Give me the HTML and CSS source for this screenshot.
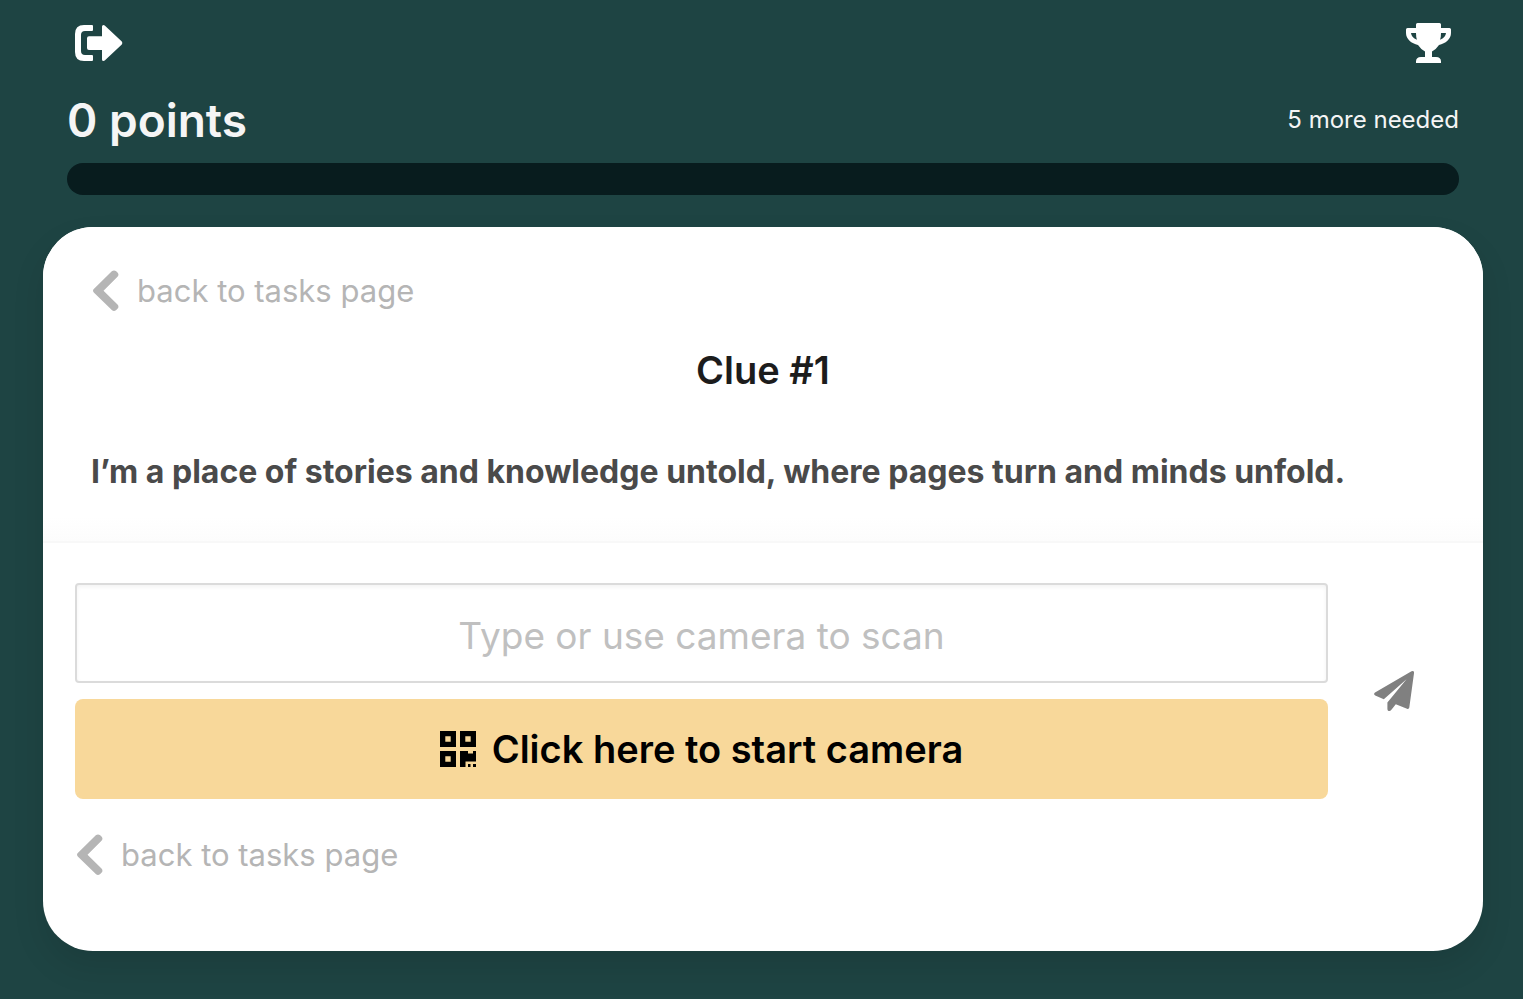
FILE: index.html
```html
<!DOCTYPE html>
<html lang="en">
<head>
<meta charset="utf-8">
<meta name="viewport" content="width=device-width, initial-scale=1">
<title>Clue #1</title>
<link rel="stylesheet" href="styles.css">
</head>
<body>
<header class="header">
  <nav class="nav">
    <button class="icon-button" type="button" aria-label="Exit">
      <svg width="48" height="36" viewBox="0 0 48 36" fill="#fff"><path d="M9 0H17Q18 0 18 1V5Q18 6 17 6H10Q6 6 6 10V26Q6 30 10 30H17Q18 30 18 31V35Q18 36 17 36H9Q0 36 0 27V9Q0 0 9 0Z"/><path d="M14 11.300H27V1.500Q27 0 28.500 0Q29.300 0 30 .7L46.800 16.600Q48 18 46.800 19.400L30 35.300Q29.300 36 28.500 36Q27 36 27 34.500V25H14Q12 25 12 23V13.300Q12 11.300 14 11.300Z"/></svg>
    </button>
    <button class="icon-button" type="button" aria-label="Leaderboard">
      <svg width="45" height="40" viewBox="0 0 45 40" fill="#fff"><path fill-rule="evenodd" d="M11.500 0H33.500Q35 0 35 1.500V5H43.500Q45 5 45 6.500V10C45 16 39.500 20.500 33 22Q30 26.500 26 28.500V34H30Q35 34 35 38.500V40H10V38.500Q10 34 15 34H19V28.500Q15 26.500 12 22C5.500 20.500 0 16 0 10V6.500Q0 5 1.500 5H10V1.500Q10 0 11.500 0ZM5 10Q5.500 14.800 10.900 16.800Q10 14 10 10ZM40 10H35Q35 14 34.100 16.800Q39.500 14.800 40 10Z"/></svg>
    </button>
  </nav>
  <div class="score">
    <h1 class="points">0 points</h1>
    <p class="needed">5 more needed</p>
  </div>
  <div class="progress" role="progressbar" aria-label="Points" aria-valuenow="0" aria-valuemin="0" aria-valuemax="5"></div>
</header>
<main class="card">
  <section class="clue">
    <a class="back" href="#tasks">
      <svg width="26" height="42" viewBox="0 0 26 42" fill="#b5b5b5"><path d="M.8 19L18.800 1.300Q21 -.5 23.200 1.300L24.700 2.800Q26.300 4.800 24.500 6.800L10.500 20.700L24.500 34.600Q26.300 36.600 24.700 38.600L23.200 40.100Q21 41.900 18.800 40.100L.8 22.400Q-.8 20.700 .8 19Z"/></svg>
      <span>back to tasks page</span>
    </a>
    <h2 class="title">Clue #1</h2>
    <p class="riddle">I’m a place of stories and knowledge untold, where pages turn and minds unfold.</p>
  </section>
  <form class="answer">
    <div class="entry">
      <div class="fields">
        <input class="code" type="text" aria-label="Answer" placeholder="Type or use camera to scan">
        <button class="camera" type="button">
          <svg width="36" height="36" viewBox="0 0 36 36"><path fill-rule="evenodd" d="M0 0H16V16H0ZM5.300 5.300V10.700H10.700V5.300ZM20 0H36V16H20ZM25.300 5.300V10.700H30.700V5.300ZM0 20H16V36H0ZM5.300 25.300V30.700H10.700V25.300ZM20 20H28V22.500H33V20H36V30.500H25.500V36H20ZM28 33H30.500V36H28ZM33 33H36V36H33Z"/></svg>
          <span>Click here to start camera</span>
        </button>
      </div>
      <button class="send" type="submit" aria-label="Send">
        <svg width="40" height="40" viewBox="0 0 40 40" fill="#808080"><path d="M37.500.3Q40.300-.8 40 2.200L35.300 36.500Q34.900 38.500 33 37.800L21.800 33.300L17 39.200Q16 40.300 14.500 39.900Q13.400 39.500 13.400 38V31.500L32.500 8.200L9.800 28.200L1.200 24.500Q-.9 23.200 1 21.600Z"/></svg>
      </button>
    </div>
    <a class="back" href="#tasks">
      <svg width="26" height="42" viewBox="0 0 26 42" fill="#b5b5b5"><path d="M.8 19L18.800 1.300Q21 -.5 23.200 1.300L24.700 2.800Q26.300 4.800 24.500 6.800L10.500 20.700L24.500 34.600Q26.300 36.600 24.700 38.600L23.200 40.100Q21 41.900 18.800 40.100L.8 22.400Q-.8 20.700 .8 19Z"/></svg>
      <span>back to tasks page</span>
    </a>
  </form>
</main>
</body>
</html>
```
FILE: styles.css
```css
* { box-sizing: border-box; }
body {
  margin: 0;
  padding: 20px 40px 48px 43px;
  background: #1e4443;
  font-family: Inter, "Liberation Sans", sans-serif;
}
h1, h2, p { margin: 0; }
button { border: 0; background: none; padding: 0; font: inherit; cursor: pointer; }
svg { display: block; flex: none; }

.header { padding: 0 24px; }
.nav { display: flex; justify-content: space-between; padding: 0 8px; }
.icon-button { display: flex; align-items: center; height: 46px; }
.score {
  display: flex;
  justify-content: space-between;
  align-items: center;
  height: 60px;
  margin: 24px 0 13px;
}
.points { font-size: 46px; font-weight: 600; line-height: 60px; color: #f5f5f5; }
.needed { font-size: 24px; line-height: 32px; color: #f5f5f5; }
.progress { height: 32px; border-radius: 16px; background: #081c1e; }

.card {
  margin-top: 32px;
  border-radius: 50px;
  background: #fff;
  box-shadow: 0 16px 32px rgba(10, 10, 10, 0.1);
  overflow: hidden;
}
.clue {
  padding: 40px 48px 45px;
  border-bottom: 2px solid #f8f8f8;
  background: linear-gradient(to top, #fcfcfc, #fff 24px);
}
.back {
  display: flex;
  align-items: center;
  gap: 18px;
  width: fit-content;
  padding-left: 2px;
  font-size: 31px;
  line-height: 48px;
  color: #b5b5b5;
  text-decoration: none;
}
.title {
  margin-top: 30px;
  font-size: 38px;
  font-weight: 600;
  line-height: 50px;
  text-align: center;
  color: #1c1c1c;
}
.riddle {
  margin-top: 53px;
  font-size: 32px;
  font-weight: 700;
  line-height: 48px;
  color: #4a4a4a;
}
.answer { padding: 40px 32px 72px; }
.entry { display: flex; align-items: center; margin-bottom: 32px; }
.fields { flex: 1; min-width: 0; display: grid; gap: 16px; }
.code {
  width: 100%;
  height: 100px;
  border: 2px solid #dbdbdb;
  border-radius: 4px;
  padding: 4px 24px 0;
  background: #fff;
  box-shadow: inset 0 2px 4px rgba(10, 10, 10, 0.05);
  font: 37px/60px Inter, "Liberation Sans", sans-serif;
  color: #363636;
  text-align: center;
}
.code::placeholder { color: #c0c0c0; opacity: 1; }
.camera {
  display: flex;
  align-items: center;
  justify-content: center;
  gap: 16px;
  height: 100px;
  border-radius: 8px;
  background: #f8d89a;
  font-size: 38px;
  font-weight: 600;
  color: #000;
}
.send { padding: 8px 37px 8px 46px; }
```
